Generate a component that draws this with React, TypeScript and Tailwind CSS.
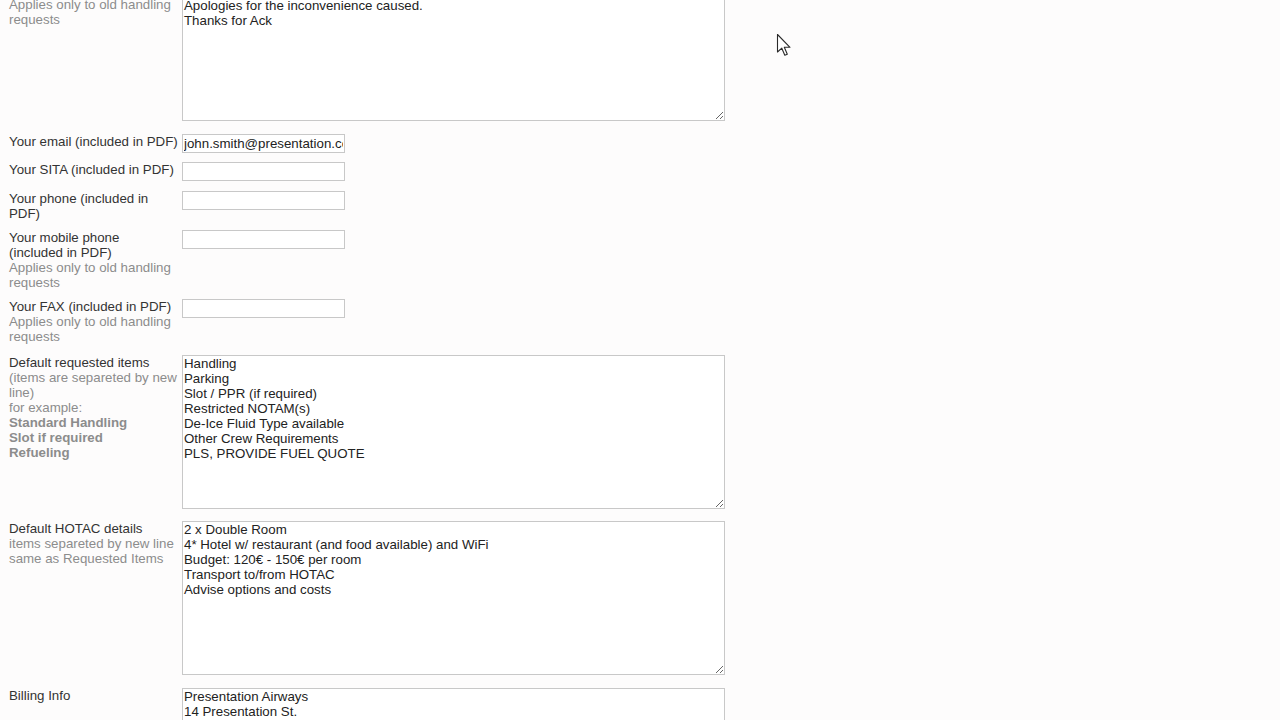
import type { ReactNode } from "react";

const font = { fontFamily: '"Liberation Sans", Arial, sans-serif' };

function Row({
  label,
  children,
  className,
}: {
  label: ReactNode;
  children: ReactNode;
  className: string;
}) {
  return (
    <div className={`flex items-start ${className}`}>
      <div className="w-[173px] shrink-0 text-[13.3px] leading-[15px] text-[#333]">{label}</div>
      {children}
    </div>
  );
}

function Note({ children }: { children: ReactNode }) {
  return <div className="text-[#8c8c8c]">{children}</div>;
}

function TextBox({ value }: { value: string }) {
  return (
    <textarea
      readOnly
      rows={10}
      value={value}
      className="block w-[543px] h-[154px] border border-[#c8c8c8] bg-white px-[1px] pt-0 pb-[1px] text-[13.3px] leading-[15px] text-[#222] outline-none"
      style={font}
    />
  );
}

function Field({ value = "" }: { value?: string }) {
  return (
    <input
      readOnly
      value={value}
      className="block w-[163px] h-[19px] border border-[#c8c8c8] bg-white px-[1px] text-[13.3px] leading-[15px] text-[#222] outline-none"
      style={font}
    />
  );
}

function Cursor() {
  return (
    <svg
      className="absolute left-[776px] top-[33px]"
      width="18"
      height="26"
      viewBox="0 0 18 26"
    >
      <path
        d="M1.5 1.5 L1.5 19 L5.8 15.2 L8.8 22.2 L11.3 21.2 L8.3 14.3 L14 14.3 Z"
        fill="#fff"
        stroke="#2a2a2a"
        strokeWidth="1.1"
        strokeLinejoin="round"
      />
    </svg>
  );
}

export default function App() {
  return (
    <div className="relative h-[720px] w-[1280px] overflow-hidden bg-[#fdfcfc]" style={font}>
      <div className="flex flex-col pl-[9px] mt-[-33px]">
        <Row
          className="mb-[13px]"
          label={
            <>
              <div>Default acknowledgement</div>
              <div>message (included in PDF)</div>
              <Note>
                Applies only to old handling
                <br />
                requests
              </Note>
            </>
          }
        >
          <TextBox
            value={"Please confirm the handling request.\nBest regards\nApologies for the inconvenience caused.\nThanks for Ack"}
          />
        </Row>

        <Row className="mb-[9px]" label={<div className="whitespace-nowrap">Your email (included in PDF)</div>}>
          <Field value="john.smith@presentation.com" />
        </Row>

        <Row className="mb-[10px]" label={<div className="whitespace-nowrap">Your SITA (included in PDF)</div>}>
          <Field />
        </Row>

        <Row
          className="mb-[9px]"
          label={
            <div>
              Your phone (included in
              <br />
              PDF)
            </div>
          }
        >
          <Field />
        </Row>

        <Row
          className="mb-[9px]"
          label={
            <>
              <div>
                Your mobile phone
                <br />
                (included in PDF)
              </div>
              <Note>
                Applies only to old handling
                <br />
                requests
              </Note>
            </>
          }
        >
          <Field />
        </Row>

        <Row
          className="mb-[11px]"
          label={
            <>
              <div className="whitespace-nowrap">Your FAX (included in PDF)</div>
              <Note>
                Applies only to old handling
                <br />
                requests
              </Note>
            </>
          }
        >
          <Field />
        </Row>

        <Row
          className="mb-[12px]"
          label={
            <>
              <div>Default requested items</div>
              <Note>
                <span className="whitespace-nowrap">(items are separeted by new</span>
                <br />
                line)
                <br />
                for example:
                <br />
                <b>Standard Handling</b>
                <br />
                <b>Slot if required</b>
                <br />
                <b>Refueling</b>
              </Note>
            </>
          }
        >
          <TextBox
            value={"Handling\nParking\nSlot / PPR (if required)\nRestricted NOTAM(s)\nDe-Ice Fluid Type available\nOther Crew Requirements\nPLS, PROVIDE FUEL QUOTE"}
          />
        </Row>

        <Row
          className="mb-[13px]"
          label={
            <>
              <div>Default HOTAC details</div>
              <Note>
                <span className="whitespace-nowrap">items separeted by new line</span>
                <br />
                same as Requested Items
              </Note>
            </>
          }
        >
          <TextBox
            value={"2 x Double Room\n4* Hotel w/ restaurant (and food available) and WiFi\nBudget: 120€ - 150€ per room\nTransport to/from HOTAC\nAdvise options and costs"}
          />
        </Row>

        <Row className="mb-[13px]" label={<div>Billing Info</div>}>
          <TextBox value={"Presentation Airways\n14 Presentation St.\nPresentation City\nPresentation Country\nVAT: PR123456789"} />
        </Row>
      </div>
      <Cursor />
    </div>
  );
}
